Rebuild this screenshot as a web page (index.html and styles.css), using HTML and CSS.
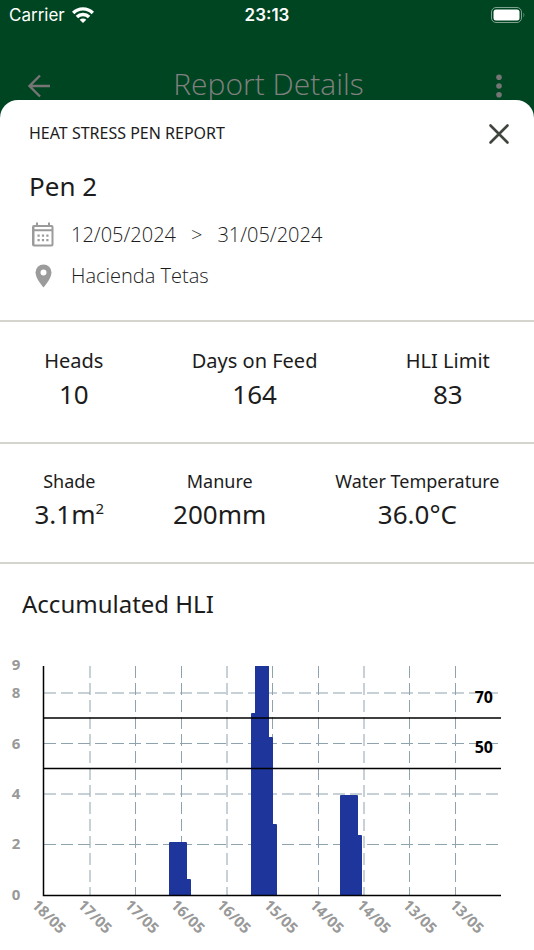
FILE: index.html
```html
<!DOCTYPE html>
<html lang="en">
<head>
    <meta charset="UTF-8">
    <title>Report Details</title>
    <meta name="viewport" content="width=device-width, initial-scale=1.0">
    <link rel="stylesheet" href="styles.css">
</head>
<body>
    <div class="statusbar">
        <span class="carrier">
            Carrier
            <svg class="wifi" width="22" height="16" viewBox="0 0 22 16" fill="none" stroke="#fff" stroke-width="3.4">
                <path d="M1.2 6a13.8 13.8 0 0 1 19.6 0" />
                <path d="M4.9 10a8.6 8.6 0 0 1 12.2 0" />
                <path d="M11 16l-3.3-3.2a4.7 4.7 0 0 1 6.6 0z" fill="#fff" stroke="none" />
            </svg>
        </span>
        <span class="time">23:13</span>
        <svg class="battery" width="34" height="16" viewBox="0 0 34 16">
            <rect x="0.5" y="0.5" width="30" height="15" rx="4.5" fill="none" stroke="#7fa18f" />
            <rect x="2.5" y="2.5" width="26" height="11" rx="2.5" fill="#fff" />
            <path d="M32.5 5.5q1.6 2.5 0 5z" fill="#7fa18f" />
        </svg>
    </div>
    <header class="navbar">
        <button class="iconbtn" aria-label="Back">
            <svg width="24" height="24" viewBox="0 0 24 24" fill="none" stroke="#757575" stroke-width="2.4">
                <path d="M24 12H3.5M14 1.5L3.5 12 14 22.5" />
            </svg>
        </button>
        <h1>Report Details</h1>
        <button class="iconbtn" aria-label="More">
            <svg width="24" height="24" viewBox="0 0 24 24" fill="#757575">
                <circle cx="12" cy="3.3" r="2.8" />
                <circle cx="12" cy="12" r="2.8" />
                <circle cx="12" cy="20.7" r="2.8" />
            </svg>
        </button>
    </header>
    <main class="sheet">
        <div class="sheet-head">
            <h2>HEAT STRESS PEN REPORT</h2>
            <button class="iconbtn" aria-label="Close">
                <svg width="24" height="24" viewBox="0 0 24 24" fill="none" stroke="#41453f" stroke-width="2.6" stroke-linecap="round">
                    <path d="M3.5 4.5l17 17M20.5 4.5l-17 17" />
                </svg>
            </button>
        </div>
        <section class="pen">
            <h3>Pen 2</h3>
            <p class="row">
                <svg width="30" height="28" viewBox="0 0 30 28" fill="#9b9b9b">
                    <path fill-rule="evenodd" d="M7 1.5h2V4h10V1.5h2V4h1.5a2 2 0 0 1 2 2v17.5a2 2 0 0 1-2 2h-17.5a2 2 0 0 1-2-2V6a2 2 0 0 1 2-2H7zM5.5 6v2.2h17V6zM5.5 10.2V23.5h17V10.2z" />
                    <path d="M8.5 13.5h2.2v2.2H8.5zM12.9 13.5h2.2v2.2h-2.2zM17.3 13.5h2.2v2.2h-2.2zM8.5 18h2.2v2.2H8.5zM12.9 18h2.2v2.2h-2.2zM17.3 18h2.2v2.2h-2.2z" />
                </svg>
                <span>12/05/2024</span>
                <span class="arrow">&gt;</span>
                <span>31/05/2024</span>
            </p>
            <p class="row">
                <svg width="30" height="28" viewBox="0 0 30 28" fill="#9b9b9b">
                    <path fill-rule="evenodd" d="M14.5 2.5a8 8 0 0 0-8 8c0 6 8 15 8 15s8-9 8-15a8 8 0 0 0-8-8zm0 5a3 3 0 1 1 0 6 3 3 0 0 1 0-6z" />
                </svg>
                <span>Hacienda Tetas</span>
            </p>
        </section>
        <dl class="stats">
            <div><dt>Heads</dt><dd>10</dd></div>
            <div><dt>Days on Feed</dt><dd>164</dd></div>
            <div><dt>HLI Limit</dt><dd>83</dd></div>
        </dl>
        <dl class="stats small">
            <div><dt>Shade</dt><dd>3.1m<sup>2</sup></dd></div>
            <div><dt>Manure</dt><dd>200mm</dd></div>
            <div><dt>Water Temperature</dt><dd>36.0°C</dd></div>
        </dl>
        <section class="hli">
            <h3>Accumulated HLI</h3>
            <svg class="chart" viewBox="0 0 534 290" role="img" aria-label="Accumulated HLI by date">
                <g class="grid">
                    <path d="M44 43H501M44 93.5H501M44 144H501M44 194.5H501" />
                    <path d="M90 16V245M135.5 16V245M181.5 16V245M227 16V245M272.5 16V245M318.5 16V245M364 16V245M409.5 16V245M455.5 16V245" />
                </g>
                <g class="bars">
                    <path d="M169 245V193q0-1 1-1H186q1 0 1 1V229H190q1 0 1 1V245z" />
                    <path d="M251 245V64q0-1 1-1H255V16H269V87H272q1 0 1 1V174H276q1 0 1 1V245z" />
                    <path d="M340 245V146q0-1 1-1H357q1 0 1 1V185H361q1 0 1 1V245z" />
                </g>
                <path class="axis" d="M43.5 16V245.5H501M43 68H501M43 118.5H501" />
                <g class="ylabels">
                    <text x="16" y="20">9</text>
                    <text x="16" y="48">8</text>
                    <text x="16" y="99">6</text>
                    <text x="16" y="149">4</text>
                    <text x="16" y="199">2</text>
                    <text x="16" y="250">0</text>
                </g>
                <g class="limits">
                    <text x="493" y="53">70</text>
                    <text x="493" y="103">50</text>
                </g>
                <g class="xlabels">
                    <text transform="translate(31 256) rotate(45)">18/05</text>
                    <text transform="translate(77 256) rotate(45)">17/05</text>
                    <text transform="translate(124 256) rotate(45)">17/05</text>
                    <text transform="translate(170 256) rotate(45)">16/05</text>
                    <text transform="translate(216 256) rotate(45)">16/05</text>
                    <text transform="translate(263 256) rotate(45)">15/05</text>
                    <text transform="translate(309 256) rotate(45)">14/05</text>
                    <text transform="translate(356 256) rotate(45)">14/05</text>
                    <text transform="translate(402 256) rotate(45)">13/05</text>
                    <text transform="translate(449 256) rotate(45)">13/05</text>
                </g>
            </svg>
        </section>
    </main>
</body>
</html>
```
FILE: styles.css
```css
* {
    box-sizing: border-box;
    margin: 0;
    padding: 0;
}
body {
    display: flex;
    flex-direction: column;
    min-height: 100vh;
    background-color: #004521;
    color: #1c1c1c;
    font-family: "Noto Sans", "Open Sans", sans-serif;
}
svg {
    display: block;
}
.statusbar {
    display: grid;
    grid-template-columns: 1fr auto 1fr;
    align-items: center;
    height: 30px;
    padding: 0 9px;
    color: white;
    font-family: Inter, sans-serif;
    font-size: 17px;
}
.carrier {
    display: flex;
    align-items: center;
    gap: 7px;
}
.time {
    font-weight: 600;
}
.battery {
    justify-self: end;
}
.navbar {
    display: flex;
    justify-content: space-between;
    align-items: flex-end;
    height: 70px;
    padding: 0 23px 0 26px;
}
.navbar h1 {
    color: #808080;
    font-family: "Open Sans", sans-serif;
    font-size: 30px;
    font-weight: 300;
    line-height: 32px;
}
.iconbtn {
    border: none;
    background: none;
    cursor: pointer;
}
.navbar .iconbtn {
    padding-bottom: 2px;
}
.sheet {
    position: relative;
    flex: 1;
    background-color: white;
    border-radius: 18px 18px 0 0;
}
.sheet-head {
    display: flex;
    justify-content: space-between;
    align-items: center;
    height: 66px;
    padding: 0 23px 0 29px;
}
.sheet-head h2 {
    font-size: 16px;
    font-weight: 400;
}
.pen {
    padding: 0 29px 24px;
    border-bottom: 2px solid #d5d5ce;
}
.pen h3 {
    margin-bottom: 8px;
    font-size: 26px;
    font-weight: 400;
    line-height: 40px;
}
.row {
    display: flex;
    align-items: center;
    height: 41px;
    color: #1c1c1c;
    font-family: "Open Sans", sans-serif;
    font-size: 20px;
    font-weight: 300;
}
.row svg {
    margin-right: 12px;
}
.arrow {
    padding: 0 15px;
}
.stats {
    display: flex;
    justify-content: space-around;
    padding: 25px 0 29px;
    border-bottom: 2px solid #d5d5ce;
    text-align: center;
}
.stats dt {
    font-size: 20px;
    line-height: 28px;
}
.stats dd {
    font-size: 26px;
    line-height: 38px;
}
.small {
    padding: 23px 0 29px;
}
.small dt {
    font-size: 18px;
}
sup {
    font-size: 15px;
    line-height: 0;
}
.hli h3 {
    padding: 22px 22px 28px;
    font-size: 24px;
    font-weight: 400;
    line-height: 36px;
}
.chart {
    width: 100%;
}
.grid {
    fill: none;
    stroke: #8ea3ae;
    stroke-dasharray: 12 5;
}
.bars {
    fill: #1e359c;
}
.axis {
    fill: none;
    stroke: black;
    stroke-width: 1.5px;
}
.chart text {
    font-size: 15px;
    font-weight: 700;
}
.ylabels {
    fill: #999;
    text-anchor: middle;
}
.chart .limits text {
    fill: black;
    font-size: 16px;
    text-anchor: end;
}
.xlabels {
    fill: #999;
}
```
